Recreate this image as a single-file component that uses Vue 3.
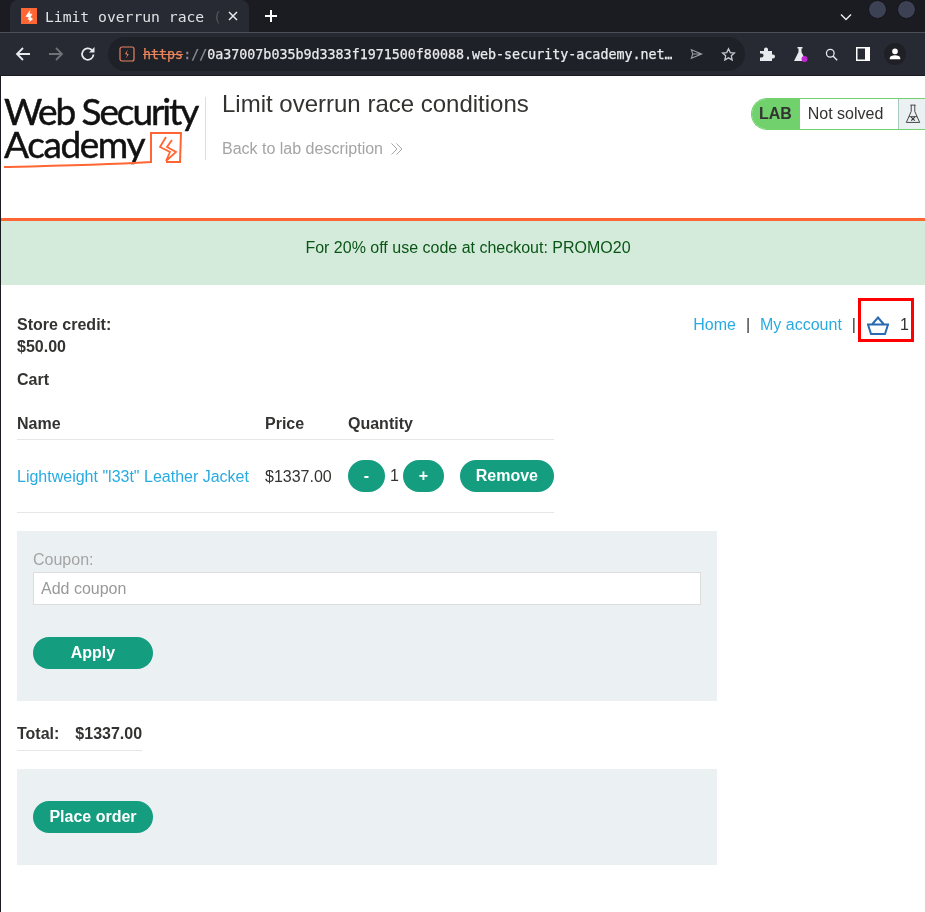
<script setup>
const rows = [{ name: 'Lightweight "l33t" Leather Jacket', price: '$1337.00', qty: 1 }]
</script>

<template>
  <div class="root">
    <div class="browser">
      <div class="tabstrip">
        <div class="tab">
          <svg class="favicon" viewBox="0 0 16 16"><rect width="16" height="16" fill="#ff6633"/><path d="M9.5 1.500 4.500 8.500 8 9.500 6.500 11 9 12.500 7.500 14.800 12 11 9.500 9 11.500 6 8.500 5.500z" fill="#fff"/></svg>
          <span class="tabtitle">Limit overrun race <i>(</i></span>
          <svg class="tabclose" viewBox="0 0 10 10"><path d="M1 1l8 8M9 1l-8 8" stroke="#e8eaed" stroke-width="1.5"/></svg>
        </div>
        <svg class="newtab" viewBox="0 0 14 14"><path d="M7 1v12M1 7h12" stroke="#fff" stroke-width="2"/></svg>
        <div class="spacer"></div>
        <svg class="chev" viewBox="0 0 12 8"><path d="M1 1.500l5 5 5-5" fill="none" stroke="#e8eaed" stroke-width="1.500"/></svg>
        <span class="dot"></span>
        <span class="dot second"></span>
      </div>
      <div class="toolbar">
        <svg class="navicon first" viewBox="0 0 16 16"><path d="M15 8H2M8 2 2 8l6 6" fill="none" stroke="#e8eaed" stroke-width="1.800"/></svg>
        <svg class="navicon" viewBox="0 0 16 16"><path d="M1 8h13M8 2l6 6-6 6" fill="none" stroke="#6f7277" stroke-width="1.800"/></svg>
        <svg class="navicon" viewBox="0 0 16 16"><path d="M13.500 8.500A5.700 5.700 0 1 1 11.800 4" fill="none" stroke="#e8eaed" stroke-width="1.800"/><path d="M14.500 1v5.500H9z" fill="#e8eaed"/></svg>
        <div class="omnibox">
          <svg class="sitebadge" viewBox="0 0 16 16"><rect x="1" y="1" width="14" height="14" rx="2" fill="none" stroke="#e8835c" stroke-width="1.200"/><path d="M8.800 3.500 6 8l2.300.7-1.500 3.800 3-4.300-2.200-.8z" fill="#e8835c"/></svg>
          <span class="url"><s>https</s><b>://</b>0a37007b035b9d3383f1971500f80088.web-security-academy.net…</span>
          <svg class="omni-send" viewBox="0 0 14 12"><path d="M1.500 1.500 12.500 6 1.500 10.500 3 6z M3 6h9" fill="none" stroke="#9aa0a6" stroke-width="1.200"/></svg>
          <svg class="omni-star" viewBox="0 0 16 16"><path d="M8 1.800l1.900 4.100 4.400.5-3.300 3 .9 4.400L8 11.600l-3.900 2.200.9-4.400-3.300-3 4.400-.5z" fill="none" stroke="#c4c7cc" stroke-width="1.400"/></svg>
        </div>
        <div class="extensions">
          <svg class="ext puzzle" viewBox="0 0 16 16"><path d="M1 5h4V3.500a2 2 0 0 1 4 0V5h4v3.500h1a2 2 0 0 1 0 4h-1V15H1v-3.500h1.500a2 2 0 0 0 0-4H1z" fill="#e8eaed"/></svg>
          <svg class="ext flask" viewBox="0 0 16 16"><path d="M5.500 1h5v1.500h-1v3.500l4.500 9H2l4.500-9V2.500h-1z" fill="#e8eaed"/><circle cx="12.500" cy="13" r="3" fill="#c026d3"/></svg>
          <svg class="ext search" viewBox="0 0 16 16"><circle cx="6.500" cy="6.500" r="4.700" fill="none" stroke="#e8eaed" stroke-width="1.600"/><path d="M9.800 9.800 15 15" stroke="#e8eaed" stroke-width="1.800"/></svg>
          <svg class="ext side" viewBox="0 0 14 14"><path d="M0 0h14v14H0z" fill="#fff"/><path d="M1.500 1.500h7.500v11H1.500z" fill="#272a33"/></svg>
          <span class="avatar"><svg viewBox="0 0 16 16"><circle cx="8" cy="5" r="3.200" fill="#fff"/><path d="M2 14v-1.500C2 10.500 5 9.500 8 9.500s6 1 6 3V14z" fill="#fff"/></svg></span>
        </div>
      </div>
    </div>

    <div class="page">
      <header class="lab-header">
        <div class="logo">
          <div class="logo-text">
            <div class="logo-line web">Web Security</div>
            <div class="logo-line academy">Academy</div>
          </div>
          <svg class="logo-mark" viewBox="0 0 200 72"><path d="M3 70C50 69 100 68 150 65V36H180L179 65H165" fill="none" stroke="#ff6633" stroke-width="2"/><path d="M165 40 159 50 169 55 165 64 175 55 166 50 171 43" fill="none" stroke="#ff6633" stroke-width="1.800"/></svg>
        </div>
        <div class="title-block">
          <h2>Limit overrun race conditions</h2>
          <a class="back">Back to lab description <svg viewBox="0 0 14 14"><path d="M1.500 1.500 7 7l-5.500 5.500M6.500 1.500 12 7l-5.500 5.500" fill="none" stroke="#a8a8a8" stroke-width="1"/></svg></a>
        </div>
        <div class="status">
          <span class="status-lab">LAB</span>
          <span class="status-text">Not solved</span>
          <span class="status-icon"><svg viewBox="0 0 18 24"><path d="M6 2h6M7 2v7L1.500 21.500h15L11 9V2M4.500 15h9" fill="none" stroke="#333" stroke-width="1"/><path d="M7 15.500l4 4M11 15.500l-4 4" stroke="#333" stroke-width="1.200"/></svg></span>
        </div>
      </header>

      <div class="banner">For 20% off use code at checkout: PROMO20</div>

      <main class="content">
        <div class="topline">
          <div class="credit"><strong>Store credit:<br>$50.00</strong></div>
          <nav class="links">
            <a>Home</a><span class="sep">|</span><a>My account</a><span class="sep">|</span>
            <span class="cart-link">
              <svg viewBox="0 0 22 19"><path d="M1 8.500h20l-3 9.500H4zM5 8.500 11 1.500l6 7" fill="none" stroke="#2a6bb0" stroke-width="2"/></svg>
              <span class="count">1</span>
            </span>
          </nav>
        </div>

        <p class="cart-title">Cart</p>

        <table class="cart">
          <thead>
            <tr><th>Name</th><th>Price</th><th colspan="2">Quantity</th></tr>
          </thead>
          <tbody>
            <tr v-for="r in rows" :key="r.name">
              <td><a>{{ r.name }}</a></td>
              <td>{{ r.price }}</td>
              <td class="qty"><button class="btn small">-</button><span>{{ r.qty }}</span><button class="btn small plus">+</button></td>
              <td class="remove"><button class="btn">Remove</button></td>
            </tr>
          </tbody>
        </table>

        <section class="panel coupon">
          <label>Coupon:</label>
          <div class="input">Add coupon</div>
          <button class="btn wide">Apply</button>
        </section>

        <div class="total"><strong>Total:</strong><strong>$1337.00</strong></div>

        <section class="panel order">
          <button class="btn wide">Place order</button>
        </section>
      </main>
    </div>
  </div>
</template>

<style>
html, body { margin: 0; background: #fff; }
</style>

<style scoped>
.root { width: 925px; height: 912px; overflow: hidden; font-family: "Liberation Sans", Arial, sans-serif; color: #333332; font-size: 16px; will-change: transform; }
.browser { height: 76px; background: #1b1c22; box-sizing: border-box; }
.tabstrip { height: 32px; display: flex; align-items: center; }
.tab { width: 239px; height: 32px; margin-left: 10px; background: #272a33; border-radius: 8px 8px 0 0; display: flex; align-items: center; box-sizing: border-box; padding: 0 0 0 11px; }
.favicon { width: 16px; height: 16px; flex: none; }
.tabtitle { font-family: "DejaVu Sans Mono", monospace; font-size: 14.700px; color: #dfe1e5; margin-left: 8px; white-space: nowrap; width: 183px; overflow: hidden; }
.tabtitle i { font-style: normal; color: #555; }
.tabclose { width: 10px; height: 10px; margin-left: 0; }
.newtab { width: 14px; height: 14px; margin-left: 15px; }
.spacer { flex: 1; }
.chev { width: 12px; height: 8px; margin-right: 16px; margin-top: 1px; }
.dot { width: 17px; height: 17px; border-radius: 50%; background: #3c4254; border: 1px solid #14151a; margin-right: 10px; margin-top: -14px; }
.dot.second { margin-right: 9px; }
.toolbar { height: 43px; background: #272a33; border-top: 1px solid #4c4f57; box-sizing: border-box; display: flex; align-items: center; padding-left: 15px; }
.navicon { width: 16px; height: 16px; margin-right: 16px; flex: none; }
.navicon.first { margin-right: 17px; }
.omnibox { width: 637px; height: 34px; margin-left: -4px; background: #1f2128; border-radius: 17px; display: flex; align-items: center; box-sizing: border-box; padding-left: 11px; flex: none; }
.sitebadge { width: 16px; height: 16px; flex: none; }
.url { font-family: "DejaVu Sans Mono", monospace; font-size: 13.330px; color: #e8eaed; margin-left: 8px; white-space: nowrap; width: 529px; overflow: hidden; -webkit-text-stroke: 0.25px currentColor; }
.url s { color: #e8835c; }
.url b { color: #8a8d93; font-weight: 400; }
.omni-send { width: 13px; height: 12px; margin-left: 18px; flex: none; }
.omni-star { width: 15px; height: 15px; margin-left: 18px; flex: none; }
.extensions { display: flex; align-items: center; margin-left: 14px; }
.ext { flex: none; }
.puzzle, .flask { width: 16px; height: 16px; margin-right: 17px; }
.search { width: 13px; height: 13px; margin-right: 18px; }
.side { width: 14px; height: 14px; margin-right: 14px; }
.avatar { width: 22px; height: 22px; border-radius: 50%; background: #1e2026; display: flex; align-items: center; justify-content: center; }
.avatar svg { width: 14px; height: 14px; }

.page { height: 836px; border-left: 1px solid #1b1c22; box-sizing: border-box; background: #fff; }
.lab-header { height: 145px; border-bottom: 3px solid #ff6633; box-sizing: border-box; display: flex; position: relative; }
.logo { position: relative; width: 205px; margin-top: 21px; border-right: 1px solid #ddd; box-sizing: border-box; padding-left: 3px; font-family: Lato, sans-serif; font-size: 37px; line-height: 33px; color: #111; flex: none; white-space: nowrap; height: 63px; -webkit-text-stroke: 0.5px #111; }
.logo-text { margin-top: -3px; }
.logo-line { height: 33px; }
.logo-line.web { letter-spacing: -2.100px; }
.logo-line.academy { letter-spacing: -1.400px; }
.logo-mark { position: absolute; left: 0; top: 0; width: 200px; height: 72px; }
.title-block { margin-left: 16px; padding-top: 14px; }
h2 { margin: 0; font-size: 24px; font-weight: 400; line-height: 28px; color: #333332; }
.back { display: flex; align-items: center; margin-top: 21px; color: #a4a4a4; font-size: 16px; line-height: 20px; }
.back svg { width: 14px; height: 14px; margin-left: 7px; }
.status { position: absolute; left: 750px; top: 22px; width: 175px; height: 32px; display: flex; box-sizing: border-box; border: 1px solid #70d16d; border-right: 0; border-radius: 16px 0 0 16px; overflow: hidden; }
.status-lab { width: 48px; background: #70d16d; font-weight: 700; text-align: center; line-height: 30px; box-sizing: border-box; padding-right: 1px; }
.status-text { width: 99px; background: #fff; line-height: 29px; padding-left: 8px; box-sizing: border-box; }
.status-icon { width: 28px; background: #ebf0f2; border-left: 1px solid #a8c8c0; box-sizing: border-box; display: flex; align-items: center; padding-left: 6px; }
.status-icon svg { width: 16px; height: 22px; }
.banner { height: 64px; box-sizing: border-box; padding-left: 10px; background: #d4ebdb; color: #0a5516; text-align: center; line-height: 53px; }
.content { padding: 0 16px; }
.topline { display: flex; justify-content: space-between; height: 83px; box-sizing: border-box; padding-top: 29px; }
.credit { line-height: 22px; }
.links { display: flex; align-items: flex-start; line-height: 20px; margin-right: -5px; padding-top: 1px; }
.links a { color: #29abe2; }
.sep { margin: 0 10px; }
.cart-link { position: relative; width: 56px; height: 44px; margin-top: -17px; margin-left: -8px; box-sizing: border-box; border: 3px solid #f00; display: flex; align-items: center; }
.cart-link svg { width: 22px; height: 19px; margin-left: 6px; margin-top: 11px; }
.count { margin-left: 11px; margin-top: 10px; }
.cart-title { margin: 2px 0 0; font-weight: 700; line-height: 20px; height: 20px; }
table.cart { margin-top: 22px; border-collapse: collapse; width: 537px; table-layout: fixed; }
th { text-align: left; font-weight: 700; height: 27px; padding: 0 0 3px; box-sizing: border-box; border-bottom: 1px solid #e3e7ea; line-height: 20px; }
th:nth-child(1), td:nth-child(1) { width: 248px; }
th:nth-child(2), td:nth-child(2) { width: 83px; }
td { height: 70px; padding: 2px 0 0; border-bottom: 1px solid #e3e7ea; vertical-align: middle; }
td.qty, td.remove { height: 72px; padding: 0; }
td a { color: #29abe2; }
.qty { width: 112px; }
.qty span { margin: 0 4px 0 5px; vertical-align: -1px; }
.remove { text-align: right; }
.btn { border: 0; background: #159d80; color: #fff; font: 700 16px "Liberation Sans", Arial, sans-serif; height: 32px; border-radius: 16px; padding: 0 16px; }
.btn.small { width: 37px; padding: 0; vertical-align: middle; }
.btn.small.plus { width: 41px; }
.btn.wide { width: 120px; padding: 0; display: block; }
.panel { width: 700px; background: #ebf0f2; box-sizing: border-box; padding: 0 16px; }
.coupon { height: 170px; margin-top: 18px; padding-top: 19px; }
.coupon label { display: block; color: #a4a4a4; line-height: 20px; }
.input { height: 33px; margin-top: 2px; background: #fff; border: 1px solid #ddd; box-sizing: border-box; color: #999; line-height: 31px; padding-left: 7px; }
.coupon .btn { margin-top: 32px; }
.total { display: flex; width: 125px; gap: 16px; height: 30px; margin-top: 20px; line-height: 24px; border-bottom: 1px solid #e3e7ea; box-sizing: border-box; padding-top: 1px; }
.order { height: 96px; margin-top: 18px; padding-top: 32px; }
</style>
